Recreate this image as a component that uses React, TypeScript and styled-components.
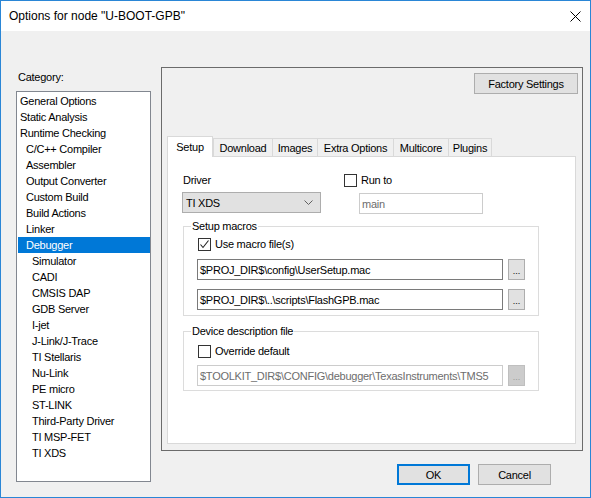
import React from "react";
import styled, { createGlobalStyle } from "styled-components";

const Global = createGlobalStyle`
  html, body { margin: 0; padding: 0; background: #f0f0f0; }
  * { box-sizing: border-box; }
`;

const Window = styled.div`
  width: 591px;
  height: 498px;
  border: 1px solid #2a86d6;
  background: #f0f0f0;
  display: flex;
  flex-direction: column;
  font-family: "Liberation Sans", Arial, sans-serif;
  font-size: 11px;
  letter-spacing: -0.25px;
  color: #000;
`;

const TitleBar = styled.div`
  height: 30px;
  flex: none;
  background: #fff;
  display: flex;
  align-items: center;
  justify-content: space-between;
  padding: 0 9px 0 8px;
  font-size: 12px;
  letter-spacing: 0;
`;

const CloseIcon = styled.svg`
  width: 11px;
  height: 11px;
  margin-top: 1px;
`;

const Body = styled.div`
  flex: 1;
  display: flex;
  padding-left: 15px;
`;

const LeftCol = styled.div`
  width: 135px;
  padding-top: 39px;
  display: flex;
  flex-direction: column;
`;

const Label = styled.div`
  line-height: 14px;
  height: 14px;
  white-space: nowrap;
`;

const CategoryLabel = styled(Label)`
  padding-left: 2px;
  margin-bottom: 7px;
`;

const List = styled.div`
  height: 391px;
  border: 1px solid #828790;
  background: #fff;
  padding: 1px 0 1px 1px;
`;

const Item = styled.div<{ $level: number; $selected?: boolean }>`
  height: 16px;
  line-height: 16px;
  padding-left: ${(p) => 2 + p.$level * 6}px;
  background: ${(p) => (p.$selected ? "#0078d7" : "transparent")};
  color: ${(p) => (p.$selected ? "#fff" : "#000")};
  white-space: nowrap;
`;

const RightCol = styled.div`
  width: 422px;
  margin-left: 10px;
  padding-top: 36px;
  display: flex;
  flex-direction: column;
`;

const Frame = styled.div`
  height: 384px;
  border: 1px solid #6b6b6b;
  display: flex;
  flex-direction: column;
  padding: 5px 4px 6px 5px;
`;

const Button = styled.button<{ $w: number; $default?: boolean }>`
  width: ${(p) => p.$w}px;
  height: 21px;
  padding: 0;
  margin: 0;
  font: inherit;
  letter-spacing: inherit;
  color: #000;
  background: #e1e1e1;
  border: ${(p) => (p.$default ? "2px solid #0078d7" : "1px solid #adadad")};
  border-radius: 0;
  display: flex;
  align-items: center;
  justify-content: center;
`;

const FactoryButton = styled(Button)`
  align-self: flex-end;
`;

const TabArea = styled.div`
  flex: 1;
  margin-top: 42px;
  margin-right: 2px;
  display: flex;
  flex-direction: column;
`;

const TabStrip = styled.div`
  height: 20px;
  display: flex;
  align-items: flex-end;
`;

const Tab = styled.div<{ $w: number; $active?: boolean; $first?: boolean }>`
  width: ${(p) => p.$w}px;
  height: ${(p) => (p.$active ? 21 : 18)}px;
  margin-bottom: ${(p) => (p.$active ? -1 : 0)}px;
  margin-left: ${(p) => (p.$first || p.$active ? 0 : -1)}px;
  position: relative;
  z-index: ${(p) => (p.$active ? 1 : 0)};
  background: ${(p) => (p.$active ? "#fff" : "#f0f0f0")};
  border: 1px solid #d9d9d9;
  border-bottom: none;
  display: flex;
  justify-content: center;
  padding-top: ${(p) => (p.$active ? 3 : 2)}px;
  line-height: 14px;
  white-space: nowrap;
`;

const Panel = styled.div`
  flex: 1;
  border: 1px solid #d9d9d9;
  background: #fff;
  padding: 16px 0 0 14px;
  display: flex;
  flex-direction: column;
`;

const TopRow = styled.div`
  display: flex;
`;

const DriverCol = styled.div`
  width: 139px;
  display: flex;
  flex-direction: column;
`;

const DriverLabel = styled(Label)`
  padding-left: 1px;
  margin-bottom: 5px;
`;

const Combo = styled.div`
  height: 21px;
  background: #e1e1e1;
  border: 1px solid #adadad;
  display: flex;
  align-items: center;
  justify-content: space-between;
  padding: 0 7px 0 3px;
`;

const RunCol = styled.div`
  margin-left: 23px;
  display: flex;
  flex-direction: column;
`;

const CheckRow = styled.label`
  height: 14px;
  display: flex;
  align-items: center;
  gap: 4px;
  white-space: nowrap;
`;

const Box = styled.span`
  width: 13px;
  height: 13px;
  margin-top: 1px;
  border: 1px solid #333;
  background: #fff;
  display: flex;
  align-items: center;
  justify-content: center;
  flex: none;
`;

const TextField = styled.div<{ $w: number; $disabled?: boolean }>`
  width: ${(p) => p.$w}px;
  height: 21px;
  border: 1px solid ${(p) => (p.$disabled ? "#cccccc" : "#7a7a7a")};
  background: #fff;
  color: ${(p) => (p.$disabled ? "#6d6d6d" : "#000")};
  display: flex;
  align-items: center;
  padding-left: 2px;
  overflow: hidden;
  white-space: nowrap;
`;

const RunField = styled(TextField)`
  margin-top: 6px;
  margin-left: 15px;
`;

const Group = styled.fieldset<{ $mt: number }>`
  width: 356px;
  margin: ${(p) => p.$mt}px 0 0 1px;
  padding: 0 0 0 13px;
  border: 1px solid #dcdcdc;
  min-width: 0;
`;

const Legend = styled.legend`
  margin-left: -6px;
  padding: 0 1px;
  line-height: 14px;
  height: 14px;
`;

const GroupCheck = styled(CheckRow)<{ $mt: number }>`
  margin-top: ${(p) => p.$mt}px;
  padding-left: 1px;
`;

const FileRow = styled.div<{ $mt: number }>`
  margin-top: ${(p) => p.$mt}px;
  display: flex;
  gap: 5px;
`;

const Browse = styled.div<{ $disabled?: boolean }>`
  width: 17px;
  height: 21px;
  background: ${(p) => (p.$disabled ? "#cccccc" : "#e1e1e1")};
  border: 1px solid ${(p) => (p.$disabled ? "#bfbfbf" : "#adadad")};
  color: ${(p) => (p.$disabled ? "#9a9a9a" : "#000")};
  display: flex;
  align-items: flex-end;
  justify-content: center;
  padding-bottom: 3px;
  font-size: 9px;
  line-height: 9px;
  letter-spacing: 0;
`;

const GroupSpacer = styled.div<{ $h: number }>`
  height: ${(p) => p.$h}px;
`;

const ButtonRow = styled.div`
  margin-top: 13px;
  padding-right: 32px;
  display: flex;
  justify-content: flex-end;
  gap: 8px;
`;

const items: [string, number][] = [
  ["General Options", 0],
  ["Static Analysis", 0],
  ["Runtime Checking", 0],
  ["C/C++ Compiler", 1],
  ["Assembler", 1],
  ["Output Converter", 1],
  ["Custom Build", 1],
  ["Build Actions", 1],
  ["Linker", 1],
  ["Debugger", 1],
  ["Simulator", 2],
  ["CADI", 2],
  ["CMSIS DAP", 2],
  ["GDB Server", 2],
  ["I-jet", 2],
  ["J-Link/J-Trace", 2],
  ["TI Stellaris", 2],
  ["Nu-Link", 2],
  ["PE micro", 2],
  ["ST-LINK", 2],
  ["Third-Party Driver", 2],
  ["TI MSP-FET", 2],
  ["TI XDS", 2],
];

const tabs: [string, number][] = [
  ["Setup", 46],
  ["Download", 60],
  ["Images", 46],
  ["Extra Options", 77],
  ["Multicore", 56],
  ["Plugins", 44],
];

const Check = () => (
  <svg width="11" height="11" viewBox="0 0 11 11">
    <polyline points="1.5,5.5 4,8.5 9.5,1.5" fill="none" stroke="#222" strokeWidth="1.1" />
  </svg>
);

export default function App() {
  return (
    <>
      <Global />
      <Window>
        <TitleBar>
          <span>Options for node "U-BOOT-GPB"</span>
          <CloseIcon viewBox="0 0 11 11">
            <path d="M0.5 0.5 L10.5 10.5 M10.5 0.5 L0.5 10.5" stroke="#000" strokeWidth="1" />
          </CloseIcon>
        </TitleBar>
        <Body>
          <LeftCol>
            <CategoryLabel>Category:</CategoryLabel>
            <List>
              {items.map(([name, level]) => (
                <Item key={name} $level={level} $selected={name === "Debugger"}>
                  {name}
                </Item>
              ))}
            </List>
          </LeftCol>
          <RightCol>
            <Frame>
              <FactoryButton $w={104}>Factory Settings</FactoryButton>
              <TabArea>
                <TabStrip>
                  {tabs.map(([name, w], i) => (
                    <Tab key={name} $w={w} $active={i === 0} $first={i === 1}>
                      {name}
                    </Tab>
                  ))}
                </TabStrip>
                <Panel>
                  <TopRow>
                    <DriverCol>
                      <DriverLabel>Driver</DriverLabel>
                      <Combo>
                        <span>TI XDS</span>
                        <svg width="9" height="5" viewBox="0 0 9 5">
                          <path d="M0.5 0.5 L4.5 4.5 L8.5 0.5" fill="none" stroke="#606060" strokeWidth="1" />
                        </svg>
                      </Combo>
                    </DriverCol>
                    <RunCol>
                      <CheckRow>
                        <Box />
                        Run to
                      </CheckRow>
                      <RunField $w={124} $disabled>
                        main
                      </RunField>
                    </RunCol>
                  </TopRow>
                  <Group $mt={5}>
                    <Legend>Setup macros</Legend>
                    <GroupCheck $mt={4}>
                      <Box>
                        <Check />
                      </Box>
                      Use macro file(s)
                    </GroupCheck>
                    <FileRow $mt={8}>
                      <TextField $w={306}>$PROJ_DIR$\config\UserSetup.mac</TextField>
                      <Browse>...</Browse>
                    </FileRow>
                    <FileRow $mt={9}>
                      <TextField $w={306}>$PROJ_DIR$\..\scripts\FlashGPB.mac</TextField>
                      <Browse>...</Browse>
                    </FileRow>
                    <GroupSpacer $h={5} />
                  </Group>
                  <Group $mt={8}>
                    <Legend>Device description file</Legend>
                    <GroupCheck $mt={6}>
                      <Box />
                      Override default
                    </GroupCheck>
                    <FileRow $mt={7}>
                      <TextField $w={306} $disabled>
                        $TOOLKIT_DIR$\CONFIG\debugger\TexasInstruments\TMS5
                      </TextField>
                      <Browse $disabled>...</Browse>
                    </FileRow>
                    <GroupSpacer $h={4} />
                  </Group>
                </Panel>
              </TabArea>
            </Frame>
            <ButtonRow>
              <Button $w={73} $default>
                OK
              </Button>
              <Button $w={73}>Cancel</Button>
            </ButtonRow>
          </RightCol>
        </Body>
      </Window>
    </>
  );
}
